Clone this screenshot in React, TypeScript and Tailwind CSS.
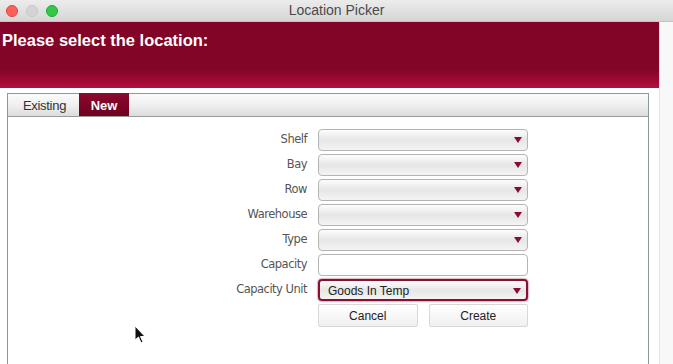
import React from "react";

const fields = ["Shelf", "Bay", "Row", "Warehouse", "Type"];

function Select({ value, focused }: { value?: string; focused?: boolean }) {
  return (
    <div
      className={
        "relative flex h-[22px] w-[210px] items-center rounded-[4px] bg-gradient-to-b from-[#fdfdfd] via-[#e6e6e6] to-[#f4f4f4] px-2 text-[12px] text-[#222] " +
        (focused
          ? "border-2 border-[#8a1030] shadow-[0_0_2px_#8a1030]"
          : "border border-[#b4b4b4]")
      }
    >
      <span className="pt-[1px]">{value}</span>
      <span className="absolute right-[5px] top-[7px] h-0 w-0 border-x-[4px] border-t-[6px] border-x-transparent border-t-[#8a0c2c]" />
    </div>
  );
}

function Label({ children }: { children: React.ReactNode }) {
  return (
    <div className="w-[170px] pr-[11px] text-right text-[11.5px] text-[#555] [font-family:'DejaVu_Sans',sans-serif] tracking-[-0.5px]">
      {children}
    </div>
  );
}

export default function App() {
  return (
    <div className="h-[364px] w-[673px] overflow-hidden bg-white [font-family:'Liberation_Sans',Arial,sans-serif]">
      <div className="relative flex h-[22px] items-center justify-center border-b border-[#c4c4c4] bg-gradient-to-b from-[#ececec] to-[#d6d6d6] text-[14px] text-[#4a4a4a]">
        <div className="absolute left-[6px] top-[5px] flex gap-[8px]">
          <span className="h-[12px] w-[12px] rounded-full border border-[#e0443e] bg-[#fc605c]" />
          <span className="h-[12px] w-[12px] rounded-full border border-[#c8c8c8] bg-[#d4d4d4]" />
          <span className="h-[12px] w-[12px] rounded-full border border-[#1aab29] bg-[#34c84a]" />
        </div>
        Location Picker
      </div>

      <div className="flex">
        <div className="w-[659px]">
          <div className="h-[66px] bg-[linear-gradient(to_bottom,#820527_0%,#820527_72%,#a10a35_90%,#b80d40_100%)] pl-[2px] pt-[6px] text-[16.5px] font-bold text-white">
            Please select the location:
          </div>

          <div className="ml-[7px] mr-[10px] mt-[5px] h-[300px] border border-b-0 border-[#8a9a9c]">
            <div className="flex h-[23px] items-end border-b border-[#9a9a9a] bg-gradient-to-b from-[#fbfbfb] via-[#f0f0f0] to-[#dcdcdc] pl-[2px] text-[13px]">
              <div className="flex h-[23px] w-[69px] items-center justify-center pt-[2px] tracking-[-0.3px] text-[#333]">
                Existing
              </div>
              <div className="flex h-[23px] w-[50px] items-center justify-center bg-gradient-to-b from-[#8c0a2e] to-[#6e0020] pt-[2px] font-bold text-white">
                New
              </div>
            </div>

            <div className="relative pt-[12px]">
              <div className="flex flex-col gap-[3px] pl-[140px]">
                {fields.map((f) => (
                  <div key={f} className="flex items-center">
                    <Label>{f}</Label>
                    <Select />
                  </div>
                ))}
                <div className="flex items-center">
                  <Label>Capacity</Label>
                  <div className="h-[22px] w-[210px] rounded-[4px] border border-[#b4b4b4] bg-white" />
                </div>
                <div className="flex items-center">
                  <Label>Capacity Unit</Label>
                  <Select value="Goods In Temp" focused />
                </div>
                <div className="flex items-center">
                  <div className="w-[170px]" />
                  <div className="flex w-[210px] gap-[11px] text-[12px] text-[#222]">
                    <button className="h-[23px] w-[100px] rounded-[2px] border border-[#d8d8d8] bg-gradient-to-b from-white to-[#f0f0f0]">
                      Cancel
                    </button>
                    <button className="h-[23px] w-[100px] rounded-[2px] border border-[#d8d8d8] bg-gradient-to-b from-white to-[#f0f0f0]">
                      Create
                    </button>
                  </div>
                </div>
              </div>

              <svg
                className="absolute left-[126px] top-[208px]"
                width="12"
                height="20"
                viewBox="0 0 12 20"
              >
                <path
                  d="M1 1 L1 15 L4.5 12 L7 18 L9 17 L6.5 11.5 L11 11.5 Z"
                  fill="#111"
                  stroke="#fff"
                  strokeWidth="1"
                />
              </svg>
            </div>
          </div>
        </div>
        <div className="h-[342px] w-[14px] border-l border-[#e4e4e4] bg-[#f8f8f8]" />
      </div>
    </div>
  );
}
